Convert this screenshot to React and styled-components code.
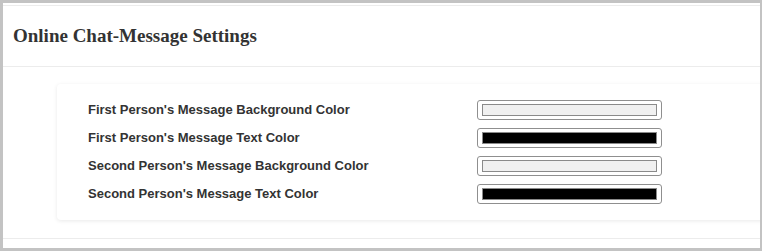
import React from 'react';
import styled, { createGlobalStyle } from 'styled-components';

const GlobalStyle = createGlobalStyle`
  html, body {
    margin: 0;
    padding: 0;
    background: #fff;
  }
`;

const Frame = styled.div`
  box-sizing: border-box;
  width: 762px;
  height: 251px;
  overflow: hidden;
  border-style: solid;
  border-color: #c3c3c3;
  border-width: 3px 2px 3px 3px;
  padding-top: 2px;
  background: #fff;
`;

const Header = styled.header`
  display: flex;
  align-items: center;
  height: 60px;
  padding: 0 10px;
  border-top: 1px solid #ececec;
  border-bottom: 1px solid #ececec;
`;

const Title = styled.h2`
  margin: 0 0 1px;
  font-family: 'Liberation Serif', 'Times New Roman', serif;
  font-size: 19px;
  font-weight: 700;
  color: #333;
`;

const Body = styled.div`
  padding: 17px 0 18px 54px;
  border-bottom: 1px solid #ececec;
`;

const Card = styled.div`
  width: 760px;
  padding: 16px 0 16px 31px;
  background: #fff;
  border-radius: 4px;
  box-shadow: 0 1px 4px rgba(0, 0, 0, 0.09);
`;

const Grid = styled.div`
  display: grid;
  grid-template-columns: 389px 185px;
  row-gap: 8px;
  align-items: center;
`;

const Label = styled.label`
  margin-top: -1px;
  font-family: 'Liberation Sans', Arial, sans-serif;
  font-size: 13px;
  font-weight: 700;
  color: #333;
`;

const ColorInput = styled.input.attrs({ type: 'color' })`
  box-sizing: border-box;
  width: 185px;
  height: 20px;
  margin: 0;
  padding: 0;
  border: 1px solid #8f8f8f;
  border-radius: 3px;
  background: #fff;
  cursor: pointer;

  &::-webkit-color-swatch-wrapper {
    padding: 3px 4px;
  }

  &::-webkit-color-swatch {
    border: 1px solid #8a8a8a;
    border-radius: 0;
  }
`;

const settings = [
  { id: 'first-bg', label: "First Person's Message Background Color", value: '#f0f0f0' },
  { id: 'first-text', label: "First Person's Message Text Color", value: '#000000' },
  { id: 'second-bg', label: "Second Person's Message Background Color", value: '#f0f0f0' },
  { id: 'second-text', label: "Second Person's Message Text Color", value: '#000000' },
];

const App = () => (
  <>
    <GlobalStyle />
    <Frame>
      <Header>
        <Title>Online Chat-Message Settings</Title>
      </Header>
      <Body>
        <Card>
          <Grid>
            {settings.map((s) => (
              <React.Fragment key={s.id}>
                <Label htmlFor={s.id}>{s.label}</Label>
                <ColorInput id={s.id} defaultValue={s.value} />
              </React.Fragment>
            ))}
          </Grid>
        </Card>
      </Body>
    </Frame>
  </>
);

export default App;
